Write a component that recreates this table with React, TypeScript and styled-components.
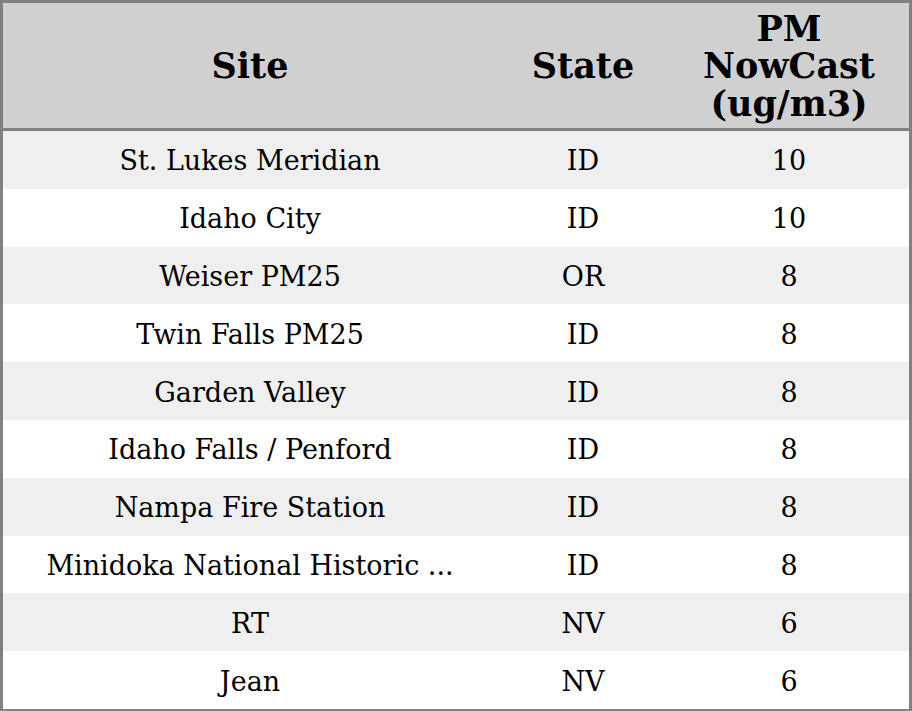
import React from "react";
import styled, { createGlobalStyle } from "styled-components";

const Global = createGlobalStyle`
  html, body { margin: 0; padding: 0; background: #fff; }
  body { font-family: "DejaVu Serif", serif; }
`;

const Table = styled.div`
  box-sizing: border-box;
  width: 912px;
  height: 711px;
  border: 3px solid #808080;
  border-bottom-width: 2px;
  display: grid;
  grid-template-columns: 494px 172px 240px;
  grid-template-rows: 125px 3px repeat(10, 1fr);
  overflow: hidden;
`;

const HeadCell = styled.div`
  background: #d0d0d0;
  display: flex;
  align-items: center;
  justify-content: center;
  text-align: center;
  font-weight: bold;
  font-size: 35px;
  line-height: 37.5px;
  padding-top: 1px;
  color: #000;
`;

const Divider = styled.div`
  grid-column: 1 / -1;
  background: #808080;
`;

const Cell = styled.div<{ $alt: boolean }>`
  background: ${(p) => (p.$alt ? "#efefef" : "#ffffff")};
  display: flex;
  align-items: center;
  justify-content: center;
  padding-top: 2px;
  font-size: 27px;
  color: #000;
  white-space: nowrap;
`;

const rows: [string, string, string][] = [
  ["St. Lukes Meridian", "ID", "10"],
  ["Idaho City", "ID", "10"],
  ["Weiser PM25", "OR", "8"],
  ["Twin Falls PM25", "ID", "8"],
  ["Garden Valley", "ID", "8"],
  ["Idaho Falls / Penford", "ID", "8"],
  ["Nampa Fire Station", "ID", "8"],
  ["Minidoka National Historic ...", "ID", "8"],
  ["RT", "NV", "6"],
  ["Jean", "NV", "6"],
];

export default function App() {
  return (
    <>
      <Global />
      <Table>
        <HeadCell>Site</HeadCell>
        <HeadCell>State</HeadCell>
        <HeadCell>
          PM
          <br />
          NowCast
          <br />
          (ug/m3)
        </HeadCell>
        <Divider />
        {rows.map((r, i) => (
          <React.Fragment key={i}>
            <Cell $alt={i % 2 === 0}>{r[0]}</Cell>
            <Cell $alt={i % 2 === 0}>{r[1]}</Cell>
            <Cell $alt={i % 2 === 0}>{r[2]}</Cell>
          </React.Fragment>
        ))}
      </Table>
    </>
  );
}
